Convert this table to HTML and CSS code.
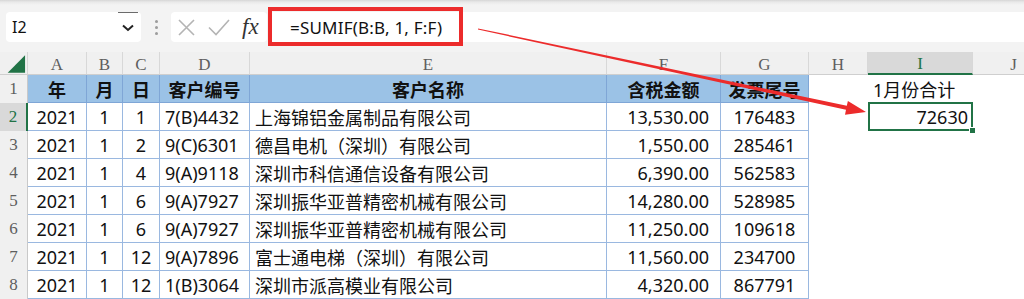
FILE: index.html
```html
<!DOCTYPE html>
<html lang="zh-CN">
<head>
<meta charset="utf-8">
<title>SUMIF</title>
<link rel="stylesheet" href="styles.css">
</head>
<body>
<div class="app">
  <div class="toolbar">
    <div class="namebox">
      <span class="name">I2</span>
      <span class="dd"><svg width="12" height="8" viewBox="0 0 12 8"><polyline points="1,1.5 6,6 11,1.5" fill="none" stroke="#222" stroke-width="2"/></svg></span>
    </div>
    <div class="grip"><i></i><i></i><i></i></div>
    <div class="fbtns">
      <svg class="ic-x" width="17" height="17" viewBox="0 0 17 17"><path d="M1 1L16 16M16 1L1 16" stroke="#b4b4b4" stroke-width="1.6" fill="none"/></svg>
      <svg class="ic-ok" width="22" height="17" viewBox="0 0 22 17"><path d="M1 8.5L8 15.5L21 1" stroke="#b4b4b4" stroke-width="1.6" fill="none"/></svg>
      <span class="fx">fx</span>
    </div>
    <div class="fbox">
      <span class="ftext">=SUMIF(B:B, 1, F:F)</span>
      <div class="annot"></div>
    </div>
  </div>

  <div class="sheet">
    <div class="cell corner"><svg width="28" height="23" viewBox="0 0 28 23"><polygon points="26,3 26,21 8,21" fill="#217346"/></svg></div>
    <div class="cell ch">A</div>
    <div class="cell ch">B</div>
    <div class="cell ch">C</div>
    <div class="cell ch">D</div>
    <div class="cell ch">E</div>
    <div class="cell ch">F</div>
    <div class="cell ch">G</div>
    <div class="cell ch">H</div>
    <div class="cell ch ch-sel">I</div>
    <div class="cell ch">J</div>

    <div class="cell rh">1</div>
    <div class="cell t hd">年</div>
    <div class="cell t hd">月</div>
    <div class="cell t hd">日</div>
    <div class="cell t hd">客户编号</div>
    <div class="cell t hd">客户名称</div>
    <div class="cell t hd">含税金额</div>
    <div class="cell t hd">发票尾号</div>
    <div class="cell"></div>
    <div class="cell lft">1月份合计</div>
    <div class="cell"></div>

    <div class="cell rh rh-sel">2</div>
    <div class="cell t ctr">2021</div>
    <div class="cell t ctr">1</div>
    <div class="cell t ctr">1</div>
    <div class="cell t lft">7(B)4432</div>
    <div class="cell t lft">上海锦铝金属制品有限公司</div>
    <div class="cell t rgt">13,530.00</div>
    <div class="cell t ctr">176483</div>
    <div class="cell"></div>
    <div class="cell rgt sel">72630</div>
    <div class="cell"></div>

    <div class="cell rh">3</div>
    <div class="cell t ctr">2021</div>
    <div class="cell t ctr">1</div>
    <div class="cell t ctr">2</div>
    <div class="cell t lft">9(C)6301</div>
    <div class="cell t lft">德昌电机（深圳）有限公司</div>
    <div class="cell t rgt">1,550.00</div>
    <div class="cell t ctr">285461</div>
    <div class="cell"></div>
    <div class="cell"></div>
    <div class="cell"></div>

    <div class="cell rh">4</div>
    <div class="cell t ctr">2021</div>
    <div class="cell t ctr">1</div>
    <div class="cell t ctr">4</div>
    <div class="cell t lft">9(A)9118</div>
    <div class="cell t lft">深圳市科信通信设备有限公司</div>
    <div class="cell t rgt">6,390.00</div>
    <div class="cell t ctr">562583</div>
    <div class="cell"></div>
    <div class="cell"></div>
    <div class="cell"></div>

    <div class="cell rh">5</div>
    <div class="cell t ctr">2021</div>
    <div class="cell t ctr">1</div>
    <div class="cell t ctr">6</div>
    <div class="cell t lft">9(A)7927</div>
    <div class="cell t lft">深圳振华亚普精密机械有限公司</div>
    <div class="cell t rgt">14,280.00</div>
    <div class="cell t ctr">528985</div>
    <div class="cell"></div>
    <div class="cell"></div>
    <div class="cell"></div>

    <div class="cell rh">6</div>
    <div class="cell t ctr">2021</div>
    <div class="cell t ctr">1</div>
    <div class="cell t ctr">6</div>
    <div class="cell t lft">9(A)7927</div>
    <div class="cell t lft">深圳振华亚普精密机械有限公司</div>
    <div class="cell t rgt">11,250.00</div>
    <div class="cell t ctr">109618</div>
    <div class="cell"></div>
    <div class="cell"></div>
    <div class="cell"></div>

    <div class="cell rh">7</div>
    <div class="cell t ctr">2021</div>
    <div class="cell t ctr">1</div>
    <div class="cell t ctr">12</div>
    <div class="cell t lft">9(A)7896</div>
    <div class="cell t lft">富士通电梯（深圳）有限公司</div>
    <div class="cell t rgt">11,560.00</div>
    <div class="cell t ctr">234700</div>
    <div class="cell"></div>
    <div class="cell"></div>
    <div class="cell"></div>

    <div class="cell rh">8</div>
    <div class="cell t ctr">2021</div>
    <div class="cell t ctr">1</div>
    <div class="cell t ctr">12</div>
    <div class="cell t lft">1(B)3064</div>
    <div class="cell t lft">深圳市派高模业有限公司</div>
    <div class="cell t rgt">4,320.00</div>
    <div class="cell t ctr">867791</div>
    <div class="cell"></div>
    <div class="cell"></div>
    <div class="cell"></div>
  </div>

  <svg class="arrow" width="1024" height="299" viewBox="0 0 1024 299">
    <polygon points="477.9,29.6 846,109.8 845,114.7 866,112 847.9,101 846.8,105.8 478.1,28.4" fill="#ec2b2b"/>
  </svg>
</div>
</body>
</html>
```

FILE: styles.css
```css
html, body {
  margin: 0;
  padding: 0;
  background: #ffffff;
}

body {
  width: 1024px;
  height: 299px;
  overflow: hidden;
  font-family: "Noto Sans", "Noto Sans CJK SC", sans-serif;
}

.app {
  position: relative;
  width: 1024px;
  height: 299px;
  overflow: hidden;
}

/* ---------- formula toolbar ---------- */
.toolbar {
  height: 52px;
  box-sizing: border-box;
  padding: 12px 0 0 6px;
  display: flex;
  align-items: flex-start;
  background: linear-gradient(#d6d6d6 0, #e9e9e9 2px, #f3f3f3 5px, #f3f3f3 100%);
}

.namebox {
  width: 135px;
  height: 30px;
  box-sizing: border-box;
  padding: 0 3px 0 6px;
  background: #ffffff;
  border-radius: 4px;
  display: flex;
  align-items: center;
  justify-content: space-between;
}

.name {
  font-size: 16px;
  color: #111;
}

.dd {
  width: 20px;
  height: 30px;
  box-sizing: border-box;
  border-top: 1px solid #6b6b6b;
  display: flex;
  align-items: center;
  justify-content: center;
}

.dd svg {
  display: block;
}

.grip {
  margin: 8px 13px 0 14px;
  display: flex;
  flex-direction: column;
  gap: 3px;
}

.grip i {
  display: block;
  width: 3px;
  height: 3px;
  border-radius: 50%;
  background: #9c9c9c;
}

.fbtns {
  width: 96px;
  height: 30px;
  box-sizing: border-box;
  padding-left: 7px;
  background: #ffffff;
  border-radius: 4px;
  display: flex;
  align-items: center;
}

.ic-x {
  display: block;
  margin-right: 13px;
}

.ic-ok {
  display: block;
  margin-right: 12px;
}

.fx {
  font-family: "Liberation Serif", serif;
  font-style: italic;
  font-size: 23px;
  color: #333;
  line-height: 1;
  margin-top: -2px;
}

.fbox {
  position: relative;
  flex: 1;
  height: 30px;
  margin-left: 3px;
  box-sizing: border-box;
  padding-left: 20px;
  background: #ffffff;
  border-radius: 4px 0 0 4px;
  display: flex;
  align-items: center;
}

.ftext {
  font-size: 17px;
  color: #111;
  letter-spacing: 0.2px;
}

.annot {
  position: absolute;
  left: -2px;
  top: -5px;
  width: 195px;
  height: 39px;
  box-sizing: border-box;
  border: 4px solid #ec2b2b;
}

/* ---------- sheet grid ---------- */
.sheet {
  display: grid;
  grid-template-columns: 28px 59px 36px 37px 90px 357px 114px 88px 59px 105px 82px;
  grid-template-rows: 23px repeat(8, 28px);
  width: 1055px;
}

.cell {
  box-sizing: border-box;
  display: flex;
  align-items: center;
  padding: 0 5px;
  font-size: 18px;
  color: #111;
  white-space: nowrap;
  overflow: hidden;
  background: #ffffff;
}

.corner {
  padding: 0;
  background: #f0f0f0;
  border-right: 1px solid #d6d6d6;
  border-bottom: 1px solid #cfcfcf;
}

.corner svg {
  display: block;
}

.ch {
  justify-content: center;
  padding-top: 3px;
  background: #f0f0f0;
  border-right: 1px solid #d8d8d8;
  border-bottom: 1px solid #cfcfcf;
  font-family: "Liberation Serif", serif;
  font-size: 17px;
  color: #5e5e5e;
}

.ch-sel {
  background: #d9d9d9;
  border-bottom: 2px solid #217346;
  color: #217346;
}

.rh {
  justify-content: center;
  padding: 0;
  background: #f0f0f0;
  border-right: 1px solid #c9c9c9;
  font-family: "Liberation Serif", serif;
  font-size: 17px;
  color: #5e5e5e;
}

.rh-sel {
  background: #d9d9d9;
  border-right: 2px solid #217346;
  color: #217346;
}

.t {
  border-right: 1px solid #9ab8e0;
  border-bottom: 1px solid #9ab8e0;
}

.hd {
  justify-content: center;
  background: #9bc2e6;
  font-weight: bold;
  border-right-color: #7fa6d6;
  border-bottom-color: #7fa6d6;
}

.ctr {
  justify-content: center;
}

.lft {
  justify-content: flex-start;
}

.rgt {
  justify-content: flex-end;
  padding-right: 11px;
}

.sel {
  position: relative;
  overflow: visible;
  padding-right: 5px;
}

.sel::after {
  content: "";
  position: absolute;
  left: 0;
  top: -1px;
  right: 0;
  bottom: 0;
  border: 2px solid #217346;
}

.sel::before {
  content: "";
  position: absolute;
  right: -3px;
  bottom: -3px;
  width: 5px;
  height: 5px;
  background: #217346;
  border: 1px solid #ffffff;
  z-index: 2;
}

/* ---------- annotation arrow ---------- */
.arrow {
  position: absolute;
  left: 0;
  top: 0;
  pointer-events: none;
}
```
